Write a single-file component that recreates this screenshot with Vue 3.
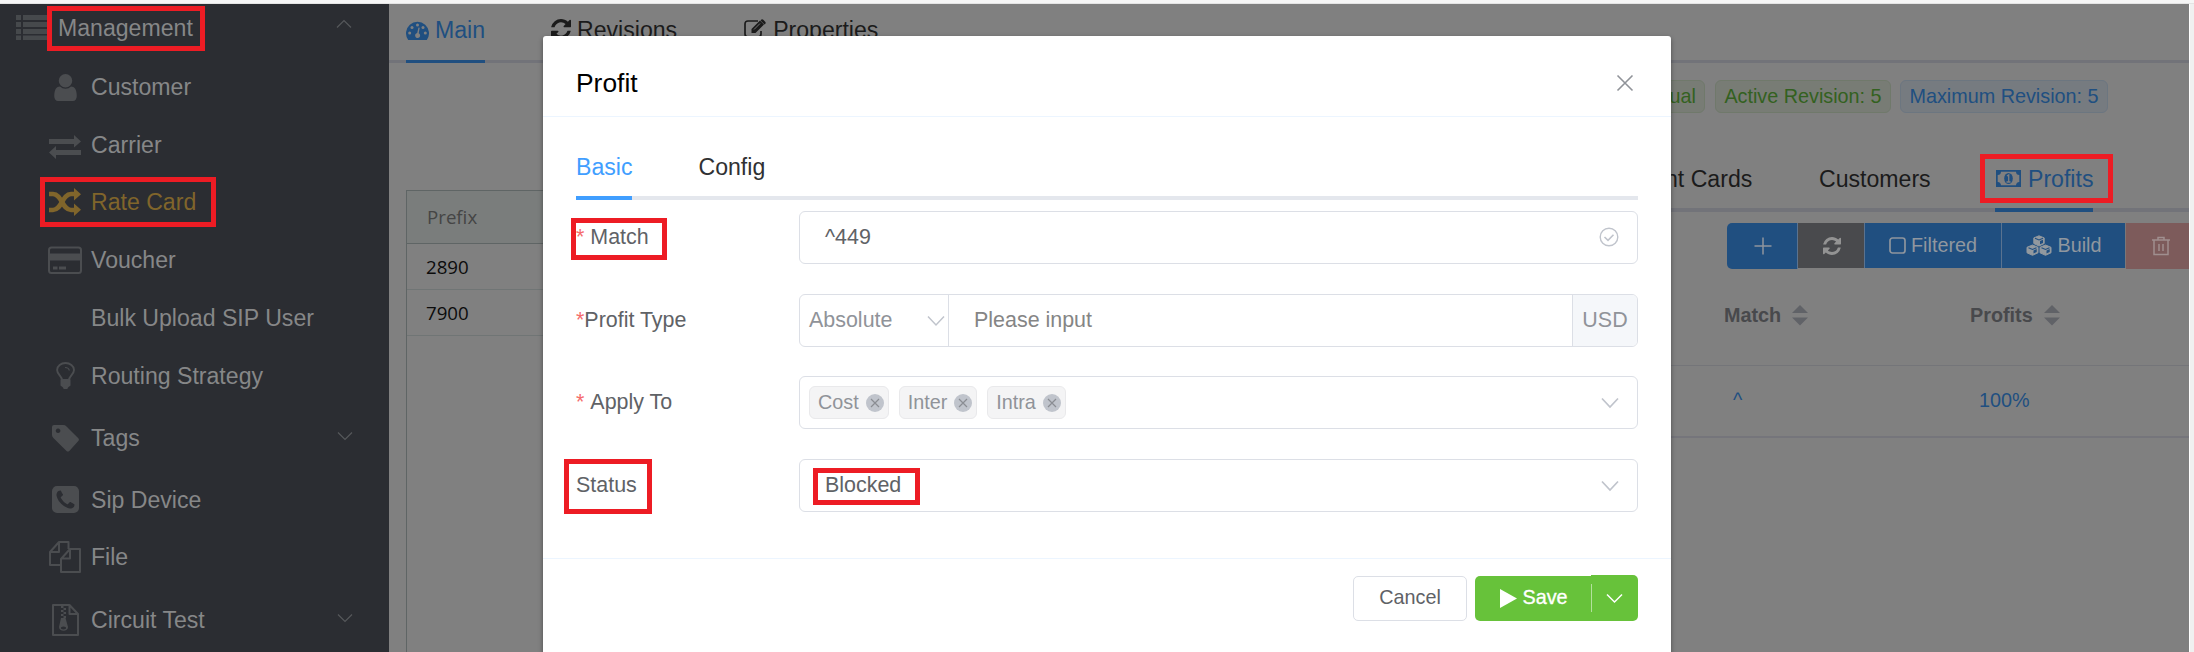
<script setup>
const menu = [
  { label: 'Customer', icon: 'user', h: 58 },
  { label: 'Carrier', icon: 'exchange', h: 57 },
  { label: 'Rate Card', icon: 'random', h: 58, active: true },
  { label: 'Voucher', icon: 'card', h: 58 },
  { label: 'Bulk Upload SIP User', icon: '', h: 58 },
  { label: 'Routing Strategy', icon: 'bulb', h: 57 },
  { label: 'Tags', icon: 'tag', h: 68, arrow: true },
  { label: 'Sip Device', icon: 'phone', h: 55 },
  { label: 'File', icon: 'files', h: 60 },
  { label: 'Circuit Test', icon: 'zip', h: 66, arrow: true }
]
const prefixes = ['2890', '7900']
const applied = ['Cost', 'Inter', 'Intra']
const refreshPath =
  'M1511 928q0 5-1 7-64 268-268 434.5t-478 166.5q-146 0-282.5-55t-243.5-157l-129 129q-19 19-45 19t-45-19-19-45v-448q0-26 19-45t45-19h448q26 0 45 19t19 45-19 45l-137 137q71 66 161 102t187 36q134 0 250-65t186-179q11-17 53-117 8-23 30-23h192q13 0 22.5 9.5t9.5 22.5zm25-800v448q0 26-19 45t-45 19h-448q-26 0-45-19t-19-45 19-45l138-138q-148-137-349-137-134 0-250 65t-186 179q-11 17-53 117-8 23-30 23h-199q-13 0-22.5-9.5t-9.5-22.5v-7q65-268 270-434.5t480-166.5q146 0 284 55.5t245 156.5l130-129q19-19 45-19t45 19 19 45z'
</script>

<template>
  <div class="page">
    <div class="topband"></div>
    <div class="body">
      <nav class="side">
        <div class="group">
          <svg class="list" width="34" height="26" viewBox="0 0 34 26">
            <path d="M0 0h5v5H0zM7 0h27v5H7zM0 7h5v5H0zM7 7h27v5H7zM0 14h5v5H0zM7 14h27v5H7zM0 20.500h5v4.500H0zM7 20.500h27v4.500H7z" fill="#46494c" />
          </svg>
          <span class="label">Management</span>
          <svg class="arr" width="16" height="10" viewBox="0 0 16 10"><path d="M1 8.500 8 1.500l7 7" fill="none" stroke="#56585b" stroke-width="1.200" /></svg>
        </div>
        <div v-for="m in menu" :key="m.label" class="item" :class="{ active: m.active }" :style="{ height: m.h + 'px' }">
          <span class="ico">
            <svg v-if="m.icon === 'user'" width="23" height="27" viewBox="0 0 1280 1536">
              <path fill="currentColor" d="M1280 1271q0 109-62.500 187t-150.500 78h-854q-88 0-150.500-78t-62.500-187q0-85 8.500-160.500t31.500-152 58.500-131 94-89 134.500-34.500q131 128 313 128t313-128q76 0 134.500 34.500t94 89 58.500 131 31.500 152 8.500 160.500zm-256-887q0 159-112.500 271.500t-271.500 112.500-271.500-112.500-112.500-271.500 112.500-271.500 271.500-112.500 271.500 112.500 112.500 271.500z" />
            </svg>
            <svg v-else-if="m.icon === 'exchange'" class="low" width="32" height="24" viewBox="0 0 32 24">
              <path fill="currentColor" d="M0 4h25V0l7 6.500-7 6V9H0zM32 15H7v-4L0 17.500 7 24v-4h25z" />
            </svg>
            <svg v-else-if="m.icon === 'random'" width="32" height="28" viewBox="0 0 32 28">
              <path fill="none" stroke="currentColor" stroke-width="4.600" d="M0 6h4c9 0 9 16 18 16h4M0 22h4c9 0 9-16 18-16h4" />
              <path fill="currentColor" d="M25 0l7 6.300-7 6.200zM25 15.500l7 6.200-7 6.300z" />
            </svg>
            <svg v-else-if="m.icon === 'card'" width="34" height="28" viewBox="0 0 34 28">
              <rect x="1" y="1.500" width="32" height="25.500" rx="2.500" fill="none" stroke="currentColor" stroke-width="2" />
              <path fill="currentColor" d="M1 7.500h32v7H1zM5 20.500h4.500v3H5zM11 20.500h7v3h-7z" />
            </svg>
            <svg v-else-if="m.icon === 'bulb'" width="19" height="27" viewBox="0 0 19 27">
              <path fill="none" stroke="currentColor" stroke-width="1.900" d="M6 18c0-4-4.900-5.500-4.900-10C1.100 4 5 1 9.500 1S18 4 18 8c0 4.500-5 6-5 10z" />
              <path fill="none" stroke="currentColor" stroke-width="1.200" d="M9 5.500c2.500 0 4 1 4.300 3" />
              <path fill="currentColor" d="M4.500 17.500h10v6L12 25.500a2.500 1.700 0 0 1-5 0L4.500 23.500z" />
            </svg>
            <svg v-else-if="m.icon === 'tag'" width="27" height="27" viewBox="0 0 27 27">
              <path fill="currentColor" fill-rule="evenodd" d="M2 0h9.500q1.500 0 3 1.400L26.300 13.200q1.300 1.400 0 2.800l-9 9.900q-1.400 1.300-2.800 0L1.400 13Q0 11.500 0 10V2q0-2 2-2zM6 3.500a2.300 2.300 0 1 0 .1 0z" />
            </svg>
            <svg v-else-if="m.icon === 'phone'" width="27" height="27" viewBox="0 128 1536 1536">
              <path fill="currentColor" d="M1280 1193q0-11-2-16-3-8-38.500-29.500t-88.500-49.500l-53-29q-5-3-19-13t-25-15-21-5q-18 0-47 32.500t-57 65.500-44 33q-7 0-16.500-3.500t-15.500-6.500-17-9.500-14-8.500q-99-55-170.500-126.500t-126.500-170.500q-2-3-8.500-14t-9.500-17-6.500-15.500-3.500-16.500q0-13 20.500-33.500t45-38.500 45-39.500 20.500-36.500q0-10-5-21t-15-25-13-19q-3-6-15-28.500t-25-45.500-26.500-47.500-25-40.500-16.500-18-16-2q-48 0-101 22-46 21-80 94.500t-34 130.500q0 16 2.500 34t5 30.500 9 33 10 29.500 12.500 33 11 30q60 164 216.500 320.500t320.500 216.500q6 2 30 11t33 12.500 29.500 10 33 9 30.500 5 34 2.500q57 0 130.500-34t94.500-80q22-53 22-101zm256-777v960q0 119-84.500 203.500t-203.500 84.500h-960q-119 0-203.500-84.500t-84.500-203.500v-960q0-119 84.500-203.500t203.500-84.500h960q119 0 203.500 84.500t84.500 203.500z" />
            </svg>
            <svg v-else-if="m.icon === 'files'" width="32" height="32" viewBox="0 0 32 32">
              <path fill="none" stroke="currentColor" stroke-width="2" stroke-linejoin="round" d="M12 24H1V11L10 1h9.500v7M10 1v10H1M31 8v23H12V18L21 8zM21 8v9.500h-9" />
            </svg>
            <svg v-else-if="m.icon === 'zip'" width="27" height="32" viewBox="0 0 27 32">
              <path fill="none" stroke="currentColor" stroke-width="2" stroke-linejoin="round" d="M1 1h16.500L26 10v21H1zM17.500 1v9H26" />
              <path fill="currentColor" fill-rule="evenodd" d="M9 2h2.500v2H9zM11.500 4H14v2h-2.500zM9 6h2.500v2H9zM11.500 8H14v2h-2.500zM9 10h2.500v2H9zM11.500 12H14v2h-2.500zM9 14h4.500L16 23c0 5-9 5-9 0zM11.500 22.500c-3.500 0-3.500 3 0 3s3.500-3 0-3z" />
            </svg>
          </span>
          <span class="label">{{ m.label }}</span>
          <svg v-if="m.arrow" class="arr" width="16" height="10" viewBox="0 0 16 10"><path d="M1 1.500l7 7 7-7" fill="none" stroke="#56585b" stroke-width="1.200" /></svg>
        </div>
      </nav>

      <main class="main">
        <div class="tabs">
          <div class="tab on">
            <svg width="23" height="19" viewBox="0 0 23 19">
              <path fill="currentColor" d="M2.200 19A11.500 11.500 0 1 1 20.800 19z" />
              <g fill="#808080">
                <circle cx="3.700" cy="12" r="1.500" /><circle cx="6" cy="6.500" r="1.500" /><circle cx="11.500" cy="4" r="1.500" /><circle cx="17" cy="6.500" r="1.500" /><circle cx="19.300" cy="12" r="1.500" />
                <path d="M12.500 6.500l1.200.3-1 5.400a2.500 2.500 0 1 1-1.500-.2z" />
              </g>
            </svg>
            <span>Main</span>
          </div>
          <div class="tab rev">
            <svg width="20" height="20" viewBox="0 0 1536 1536"><path fill="#1b1b1b" :d="refreshPath" /></svg>
            <span>Revisions</span>
          </div>
          <div class="tab prop">
            <svg width="23" height="20" viewBox="0 0 23 20">
              <path fill="none" stroke="#1b1b1b" stroke-width="1.700" d="M14 2H4Q1 2 1 5v10q0 3 3 3h10q3 0 3-3v-3" />
              <path fill="#1b1b1b" d="M7.500 14V10L16 1.500l4 4L11.500 14zM17 .8q1.200-1.200 2.300 0l1.900 1.900q1 1 0 2.200l-.6.600-4-4z" />
              <path stroke="#808080" stroke-width=".9" d="M10 10.500l6-6" />
            </svg>
            <span>Properties</span>
          </div>
        </div>
        <div class="badges">
          <span class="badge green first">ual</span>
          <span class="badge green second">Active Revision: 5</span>
          <span class="badge blue">Maximum Revision: 5</span>
        </div>
        <div class="panes">
          <div class="prefixes">
            <div class="phead">Prefix</div>
            <div v-for="p in prefixes" :key="p" class="prow">{{ p }}</div>
          </div>
          <section class="right">
            <div class="tabs2">
              <span class="t2 cards">nt Cards</span>
              <span class="t2 cust">Customers</span>
              <span class="t2 prof">
                <svg width="25" height="17" viewBox="0 0 25 17">
                  <path fill="currentColor" fill-rule="evenodd" d="M0 0h25v17H0zM5 1.700a3.500 3.500 0 0 1-3.300 3.300v7A3.500 3.500 0 0 1 5 15.300h15a3.500 3.500 0 0 1 3.300-3.300V5A3.500 3.500 0 0 1 20 1.700z" />
                  <ellipse cx="12.500" cy="8.500" rx="4.300" ry="5.500" fill="currentColor" />
                  <path fill="none" stroke="#808080" stroke-width="1.300" d="M11 6l1.700-1v6.500M10.500 12h4" />
                </svg>
                <span>Profits</span>
              </span>
            </div>
            <div class="btns">
              <div class="b plus"><svg width="18" height="18" viewBox="0 0 18 18"><path d="M9 .5v17M.5 9h17" stroke="#8e959d" stroke-width="1.500" /></svg></div>
              <div class="b ref"><svg width="18" height="18" viewBox="0 0 1536 1536"><path fill="#939393" :d="refreshPath" /></svg></div>
              <div class="b fil"><svg width="17" height="17" viewBox="0 0 17 17"><rect x="1" y="1" width="15" height="15" rx="2.500" fill="none" stroke="#8e959d" stroke-width="1.700" /></svg><span>Filtered</span></div>
              <div class="b bui">
                <svg width="26" height="21" viewBox="0 0 26 21">
                  <g fill="#92999f" stroke="#92999f" stroke-linejoin="round">
                    <path d="M13 .8l5.200 2.100v5.600L13 11 7.800 8.500V2.900zM6.500 10l5.500 2.300v5.500L6.500 20.300 1 17.800v-5.500zM19.500 10l5.500 2.300v5.500l-5.500 2.500-5.500-2.500v-5.500z" />
                  </g>
                  <path fill="none" stroke="#204f80" stroke-width="1.100" d="M9 3.300l4 1.700 4-1.700M2.500 12.700l4 1.800 4-1.800M15.500 12.700l4 1.800 4-1.800" />
                  <path fill="#204f80" d="M14 6l3-1.300v3.200L14 9.300zM7.500 15.500l3.200-1.400v3l-3.200 1.500zM20.500 15.500l3.200-1.400v3l-3.200 1.500z" />
                </svg>
                <span>Build</span>
              </div>
              <div class="b del"><svg width="18" height="20" viewBox="0 0 18 20"><path d="M0 4h18M6 4V1.500h6V4M2 4v14.500h14V4M7 8v7M11 8v7" fill="none" stroke="#a08f8f" stroke-width="1.500" /></svg></div>
            </div>
            <div class="thead">
              <div class="c1"><b>Match</b><svg width="16" height="21" viewBox="0 0 16 21"><path fill="#606267" d="M0 8l8-8 8 8zM0 12.500h16l-8 8z" /></svg></div>
              <div class="c2"><b>Profits</b><svg width="16" height="21" viewBox="0 0 16 21"><path fill="#606267" d="M0 8l8-8 8 8zM0 12.500h16l-8 8z" /></svg></div>
            </div>
            <div class="trow"><span class="v1">^</span><span class="v2">100%</span></div>
          </section>
        </div>
      </main>
      <div class="edge"></div>
    </div>

    <div class="modal">
      <header class="mhead">
        <span>Profit</span>
        <svg width="18" height="18" viewBox="0 0 18 18"><path d="M1.500 1.500l15 15M16.500 1.500l-15 15" stroke="#909399" stroke-width="1.600" /></svg>
      </header>
      <div class="mtabs"><span class="mt on">Basic</span><span class="mt">Config</span></div>
      <div class="form">
        <div class="row r1">
          <label class="sp"><i>*</i>Match</label>
          <div class="input">
            <span class="val">^449</span>
            <svg class="end" width="20" height="20" viewBox="0 0 20 20"><circle cx="10" cy="10" r="8.800" fill="none" stroke="#c0c4cc" stroke-width="1.400" /><path d="M5.500 10l3.500 3.300 5.500-5.600" fill="none" stroke="#c0c4cc" stroke-width="1.600" /></svg>
          </div>
        </div>
        <div class="row r2">
          <label><i>*</i>Profit Type</label>
          <div class="input">
            <div class="pre"><span>Absolute</span><svg width="18" height="12" viewBox="0 0 18 12"><path d="M1 1.500l8 8.500 8-8.500" fill="none" stroke="#c0c4cc" stroke-width="1.500" /></svg></div>
            <span class="ph">Please input</span>
            <div class="app">USD</div>
          </div>
        </div>
        <div class="row r3">
          <label class="sp"><i>*</i>Apply To</label>
          <div class="input tags">
            <span v-for="a in applied" :key="a" class="tag">{{ a }}<svg width="18" height="18" viewBox="0 0 18 18"><circle cx="9" cy="9" r="9" fill="#c0c4cc" /><path d="M5 5l8 8M13 5l-8 8" stroke="#8a8d93" stroke-width="1.200" /></svg></span>
            <svg class="end" width="18" height="12" viewBox="0 0 18 12"><path d="M1 1.500l8 8.500 8-8.500" fill="none" stroke="#c0c4cc" stroke-width="1.700" /></svg>
          </div>
        </div>
        <div class="row r4">
          <label>Status</label>
          <div class="input">
            <span class="val">Blocked</span>
            <svg class="end" width="18" height="12" viewBox="0 0 18 12"><path d="M1 1.500l8 8.500 8-8.500" fill="none" stroke="#c0c4cc" stroke-width="1.700" /></svg>
          </div>
        </div>
      </div>
      <footer class="foot">
        <button class="cancel">Cancel</button>
        <button class="save"><svg width="17" height="19" viewBox="0 0 17 19"><path fill="#fff" d="M0 0l17 9.500L0 19z" /></svg>Save</button>
        <button class="drop"><svg width="17" height="11" viewBox="0 0 17 11"><path d="M1 1.500l7.500 7.500L16 1.500" fill="none" stroke="#fff" stroke-width="1.500" /></svg></button>
      </footer>
    </div>

    <div class="mark m1"></div>
    <div class="mark m2"></div>
    <div class="mark m3"></div>
    <div class="mark m4"></div>
    <div class="mark m5"></div>
    <div class="mark m6"></div>
  </div>
</template>

<style>
body { margin: 0; overflow: hidden; }
</style>

<style scoped>
* { box-sizing: border-box; }
svg { flex: none; display: block; }
.page { position: relative; width: 2194px; height: 652px; overflow: hidden; background: #808080; font-family: "Liberation Sans", Arial, sans-serif; font-size: 23.100px; line-height: 1.200; white-space: nowrap; }
.topband { height: 4px; background: linear-gradient(#f6f6f6 0 3px, #e4e4e4 3px); }
.body { display: flex; height: 648px; }
.side { width: 389px; background: #2b2d32; color: #868788; overflow: hidden; flex: none; }
.group { display: flex; align-items: center; height: 54px; padding: 0 37px 6px 16px; }
.group .list { margin-right: 7px; }
.group .arr { margin-bottom: 8px; }
.arr { margin-left: auto; }
.label { padding: 2px 0 0 1px; }
.item { display: flex; align-items: center; padding: 0 36px 0 48px; }
.item .arr { margin-bottom: 4px; }
.ico { width: 34px; margin-right: 8px; display: flex; justify-content: center; color: #4b4d50; }
.low { margin-top: 5px; }
.active, .active .ico { color: #80652b; }
.main { width: 1800px; display: flex; flex-direction: column; flex: none; overflow: hidden; }
.edge { width: 5px; background: #f0f0f0; border-left: 1px solid #fff; }
.tabs { display: flex; height: 59px; padding-left: 17px; box-shadow: inset 0 -3px #727379; color: #1b1b1b; }
.tab { display: flex; align-items: center; height: 59px; padding-bottom: 7px; }
.tab span { margin: 2px 0 0 6px; }
.tab.on { width: 79px; box-shadow: inset 0 -3px #204f80; color: #204f80; }
.rev { margin-left: 66px; }
.prop { margin-left: 67px; }
.rev svg, .prop svg { margin-bottom: 3px; }
.badges { display: flex; justify-content: flex-end; padding: 17px 81px 0 0; font-size: 19.800px; }
.badge { height: 33px; padding: 0 8px; border: 1px solid; border-radius: 6px; line-height: 30px; text-align: center; }
.green { background: #787c75; border-color: #70796b; color: #336120; }
.blue { background: #767b80; border-color: #6c7680; color: #204f80; width: 208px; }
.first { width: 60px; text-align: right; margin-right: 10px; }
.second { width: 176px; margin-right: 9px; }
.panes { display: flex; justify-content: space-between; flex: 1; }
.prefixes { margin: 77px 0 0 17px; width: 300px; border: 1px solid #5f6565; border-width: 1px 0 0 1px; font-family: "Open Sans", "Noto Sans", sans-serif; font-size: 18.700px; }
.phead { height: 53px; line-height: 51px; padding-left: 20px; background: #7a7d7c; border-bottom: 1px solid #5f6565; color: #454545; }
.prow { height: 46px; line-height: 45px; padding-left: 19px; border-bottom: 1px solid #707575; color: #0c0c0c; }
.right { width: 518px; }
.tabs2 { display: flex; height: 99px; box-shadow: inset 0 -4px #727379; align-items: flex-end; color: #1b1b1b; }
.t2 { height: 47px; line-height: 28px; }
.cards { width: 87px; margin-left: -6px; }
.cust { margin-left: 67px; width: 111px; }
.prof { margin-left: 65px; width: 98px; display: flex; color: #204f80; box-shadow: inset 0 -4px #204f80; }
.prof svg { margin: 5px 6px 0 1px; }
.prof span { padding-left: 1px; }
.btns { display: flex; height: 46px; margin: 11px 0 0 56px; font-size: 19.800px; color: #90979f; }
.b { height: 45px; display: flex; align-items: center; justify-content: center; border-right: 1px solid #5a7390; background: #204f80; }
.b span { margin-left: 5px; }
.plus { width: 71px; height: 46px; border-radius: 5px 0 0 5px; padding-left: 2px; }
.ref { width: 67px; background: #494a4d; padding-left: 1px; }
.fil { width: 137px; }
.bui { width: 124px; border-right: 1px solid #7b7778; }
.bui span { margin-left: 6px; }
.del { width: 63px; height: 46px; border: 0; background: #7d5b5b; padding-right: 0; justify-content: flex-start; padding-left: 26px; }
.thead { display: flex; height: 97px; border-bottom: 1px solid #747579; padding: 34px 0 0 53px; font-size: 19.800px; color: #48494c; }
.thead div { display: flex; align-items: flex-start; }
.thead b { line-height: 24px; }
.thead svg { margin: 2px 0 0 11px; }
.c1 { width: 246px; }
.trow { display: flex; height: 72px; border-bottom: 2px solid #75757b; color: #204f80; font-size: 19.800px; line-height: 68px; padding-left: 62px; }
.v1 { width: 246px; }
.modal { position: absolute; left: 543px; top: 36px; width: 1128px; height: 640px; background: #fff; border-radius: 3px; box-shadow: 0 2px 5px rgba(0, 0, 0, .4); padding: 0 33px; }
.mhead { height: 81px; margin: 0 -33px; padding: 15px 37px 0 33px; border-bottom: 1px solid #ecf5ff; display: flex; justify-content: space-between; align-items: center; font-size: 26.400px; color: #000; }
.mhead svg { margin-bottom: 1px; }
.mtabs { display: flex; height: 83px; box-shadow: inset 0 -4px #e4e7ed; color: #303133; }
.mt { padding-top: 36px; line-height: 28px; margin-right: 66px; }
.mt.on { color: #409eff; box-shadow: inset 0 -4px #409eff; }
.form { height: 359px; border-bottom: 1px solid #ecf5ff; margin: 0 -33px; padding: 11px 33px 0; font-size: 21.450px; color: #606266; }
.row { display: flex; height: 53px; }
.r1, .r3 { margin-bottom: 30px; }
.r2 { margin-bottom: 29px; }
label { width: 223px; line-height: 53px; }
label i { color: #f56c6c; font-style: normal; }
.sp i { margin-right: 6px; }
.input { display: flex; align-items: center; width: 839px; border: 1px solid #dcdfe6; border-radius: 6px; overflow: hidden; }
.val { margin-left: 25px; }
.end { margin: 0 18px 0 auto; }
.r1 .end { margin-bottom: 2px; }
.pre { width: 149px; height: 51px; border-right: 1px solid #dcdfe6; padding: 0 3px 0 9px; display: flex; align-items: center; justify-content: space-between; color: #909399; }
.ph { margin-left: 25px; color: #858585; }
.app { margin-left: auto; width: 65px; height: 51px; line-height: 51px; text-align: center; background: #f5f7fa; border-left: 1px solid #dcdfe6; color: #909399; }
.tags { padding-left: 9px; }
.tag { display: flex; align-items: center; height: 33px; margin: 0 10px 0 0; padding: 0 4px 0 8px; border: 1px solid #e9e9eb; border-radius: 6px; background: #f4f4f5; color: #909399; font-size: 19.800px; }
.tag svg { margin-left: 7px; }
.foot { display: flex; justify-content: flex-end; padding-top: 17px; }
button { font: inherit; font-size: 19.800px; display: flex; align-items: center; justify-content: center; padding: 0; border: 0; height: 45px; }
.cancel { width: 114px; background: #fff; border: 1px solid #dcdfe6; border-radius: 5px; color: #606266; margin-right: 8px; padding-bottom: 1px; }
.save { width: 116px; background: #67c23a; color: #fff; border-radius: 5px 0 0 5px; -webkit-text-stroke: .35px #fff; padding: 0 0 1px 2px; }
.save svg { margin-right: 5px; }
.drop { width: 47px; height: 46px; margin-top: -1px; border-radius: 0 5px 5px 0; background: linear-gradient(#b3e19d, #b3e19d) 0 9px / 1px 28px no-repeat #67c23a; }
.mark { position: absolute; border: 5px solid #ed1c24; }
.m1 { left: 47px; top: 6px; width: 158px; height: 45px; }
.m2 { left: 40px; top: 177px; width: 176px; height: 50px; }
.m3 { left: 571px; top: 218px; width: 96px; height: 42px; }
.m4 { left: 564px; top: 459px; width: 88px; height: 55px; }
.m5 { left: 813px; top: 468px; width: 107px; height: 37px; }
.m6 { left: 1980px; top: 154px; width: 133px; height: 49px; }
</style>
